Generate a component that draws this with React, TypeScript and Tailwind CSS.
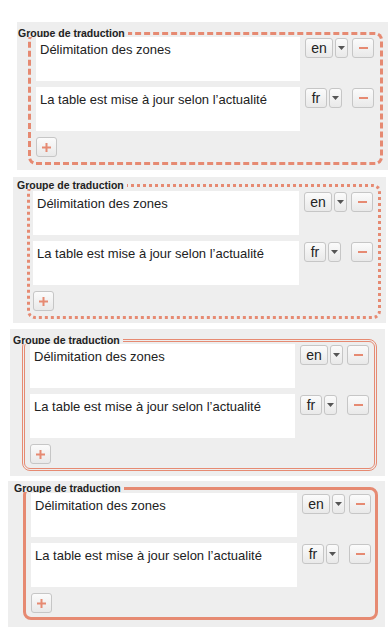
import React from "react";

function Caret() {
  return (
    <svg width="7" height="4" viewBox="0 0 7 4" className="block">
      <polygon points="0,0 7,0 3.5,4" fill="#555555" />
    </svg>
  );
}

function Minus() {
  return <div className="h-[2px] w-[9px] bg-[#e68a72]" />;
}

function Plus() {
  return (
    <svg width="9" height="9" viewBox="0 0 9 9" className="block">
      <rect x="0" y="3.5" width="9" height="2" fill="#e68a72" />
      <rect x="3.5" y="0" width="2" height="9" fill="#e68a72" />
    </svg>
  );
}

const btn =
  "flex items-center justify-center rounded-[3px] border border-[#c6c6c6] bg-linear-to-b from-[#fbfbfb] to-[#e9e9e9]";

function Row({ text, lang }: { text: string; lang: "en" | "fr" }) {
  return (
    <div className="flex items-start gap-[5px]">
      <textarea
        readOnly
        defaultValue={text}
        className="h-[44px] min-w-0 flex-1 resize-none border-0 bg-white px-[4px] pt-[5px] pb-[3px] text-[13px] leading-[15px] text-[#222222] outline-none"
      />
      <div className="flex w-[69px] items-start pt-px">
        <div className="flex gap-[2px]">
          <div
            className={
              lang === "en"
                ? "flex h-[20px] w-[28px] items-center justify-center rounded-[3px] border border-[#c6c6c6] bg-linear-to-b from-[#fbfbfb] to-[#e9e9e9] text-[14px] text-[#222222]"
                : "flex h-[20px] w-[22px] items-center justify-center rounded-[3px] border border-[#c6c6c6] bg-linear-to-b from-[#fbfbfb] to-[#e9e9e9] text-[14px] text-[#222222]"
            }
          >
            {lang}
          </div>
          <div className={btn + " h-[20px] w-[13px]"}>
            <Caret />
          </div>
        </div>
        <div className={btn + " ml-auto h-[20px] w-[22px]"}>
          <Minus />
        </div>
      </div>
    </div>
  );
}

function Group({
  wrap,
  fs,
  legend,
}: {
  wrap: string;
  fs: string;
  legend: string;
}) {
  return (
    <div className={wrap}>
      <fieldset className={fs}>
        <legend className={legend}>Groupe de traduction</legend>
        <div className="flex flex-col gap-[6px]">
          <Row text="Délimitation des zones" lang="en" />
          <Row text="La table est mise à jour selon l’actualité" lang="fr" />
          <div className={btn + " h-[20px] w-[21px]"}>
            <Plus />
          </div>
        </div>
      </fieldset>
    </div>
  );
}

const legendBase =
  "h-[8px] whitespace-nowrap pr-[3px] text-[10.5px] font-bold leading-[8px] text-[#222222]";

export default function App() {
  return (
    <div className="min-h-[630px] bg-white pt-[22px] font-['Liberation_Sans',Arial,sans-serif]">
      <Group
        wrap="ml-[17px] w-[371px] bg-[#eeeeee] pt-[7px] pb-[5px]"
        fs="ml-[11px] mr-[5px] rounded-[8px] border-[3px] border-dashed border-[#e68a72] pl-[5px] pr-[6px] pt-0 pb-[5px]"
        legend={legendBase + " -ml-[18px]"}
      />
      <Group
        wrap="mt-[7px] ml-[13px] w-[373px] bg-[#eeeeee] pt-[4px] pb-[4px]"
        fs="ml-[14px] mr-[5px] rounded-[8px] border-[3px] border-dotted border-[#e68a72] pl-[3px] pr-[5px] pt-[2px] pb-[5px]"
        legend={legendBase + " -ml-[16px]"}
      />
      <Group
        wrap="mt-[6px] ml-[10px] w-[375px] bg-[#eeeeee] pt-[7px] pb-[5px]"
        fs="ml-[12px] mr-[8px] rounded-[8px] border-[3px] border-double border-[#e68a72] pl-[5px] pr-[5px] pt-0 pb-[4px]"
        legend={legendBase + " -ml-[17px]"}
      />
      <Group
        wrap="mt-[5px] ml-[8px] w-[377px] bg-[#eeeeee] pt-[3px] pb-[7px]"
        fs="ml-[15px] mr-[7px] rounded-[8px] border-[3px] border-solid border-[#e68a72] pl-[5px] pr-[4px] pt-px pb-[4px]"
        legend={legendBase + " -ml-[17px]"}
      />
    </div>
  );
}
